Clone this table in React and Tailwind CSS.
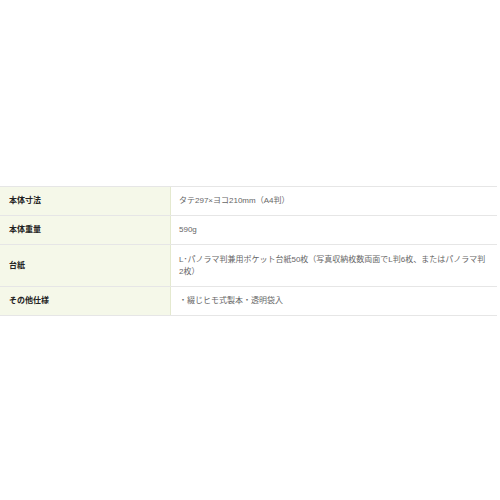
export default function App() {
  const rows = [
    { label: "本体寸法", value: "タテ297×ヨコ210mm（A4判）", h: "h-[29px]" },
    { label: "本体重量", value: "590g", h: "h-[29px]" },
    { label: "台紙", value: "L･パノラマ判兼用ポケット台紙50枚（写真収納枚数両面でL判6枚、またはパノラマ判2枚）", h: "h-[42px]" },
    { label: "その他仕様", value: "・綴じヒモ式製本・透明袋入", h: "h-[29px]" },
  ];
  return (
    <div className="w-[500px] h-[500px] bg-white" style={{ fontFamily: '"Liberation Sans", "Noto Sans CJK JP", sans-serif' }}>
      <div className="h-[186px]" />
      <div className="w-[497px] border-t border-[#e6e6e6]">
        {rows.map((r, i) => (
          <div key={i} className={`grid grid-cols-[171px_1fr] border-b border-[#e6e6e6] ${r.h}`}>
            <div className="bg-[#f5f8e9] border-r border-[#e4e9cf] flex items-center pl-[9px] text-[8px] font-bold text-[#222]">
              {r.label}
            </div>
            <div className="flex items-center pl-[8px] pr-[10px] text-[8px] leading-[12px] text-[#666]">
              {r.value}
            </div>
          </div>
        ))}
      </div>
    </div>
  );
}
